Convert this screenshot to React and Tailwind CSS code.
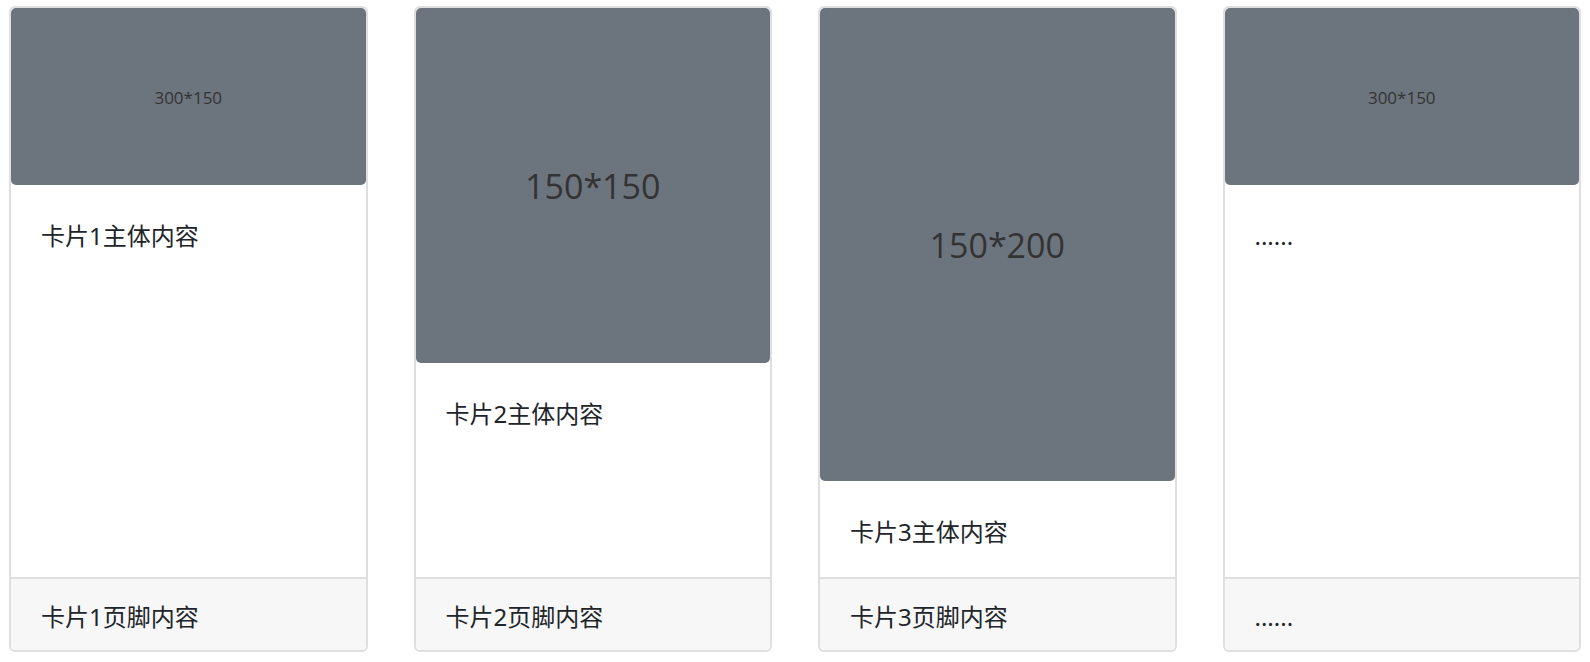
const cards = [
  { img: "300*150", ratio: "aspect-[2/1]", size: "text-[17px]", body: "卡片1主体内容", foot: "卡片1页脚内容" },
  { img: "150*150", ratio: "aspect-square", size: "text-[34px]", body: "卡片2主体内容", foot: "卡片2页脚内容" },
  { img: "150*200", ratio: "aspect-[3/4]", size: "text-[34px]", body: "卡片3主体内容", foot: "卡片3页脚内容" },
  { img: "300*150", ratio: "aspect-[2/1]", size: "text-[17px]", body: "......", foot: "......" },
];

const Card = ({ card }) => (
  <div className="flex flex-col border-2 border-[#dfdfdf] rounded-[6px] bg-white">
    <div
      className={`${card.ratio} w-full bg-[#6c757d] rounded-[5px] flex items-center justify-center pt-[3px]`}
    >
      <span className={`${card.size} text-[#333] font-['Open_Sans',sans-serif]`}>{card.img}</span>
    </div>
    <div className="flex-1 px-[30px] pt-[33px] pb-[27px]">
      <p className="text-[24px] leading-[36px] text-[#212529]">{card.body}</p>
    </div>
    <div className="border-t-2 border-[#dfdfdf] bg-[#f7f7f7] px-[30px] pt-[20px] pb-[15px] rounded-b-[5px]">
      <p className="text-[24px] leading-[36px] text-[#212529]">{card.foot}</p>
    </div>
  </div>
);

const App = () => {
  return (
    <div className="min-h-screen bg-white px-[9px] pt-[6px] font-['Noto_Sans','Noto_Sans_CJK_SC',sans-serif]">
      <div className="grid grid-cols-4 gap-[46px]">
        {cards.map((c, i) => (
          <Card key={i} card={c} />
        ))}
      </div>
    </div>
  );
};

export default App;
